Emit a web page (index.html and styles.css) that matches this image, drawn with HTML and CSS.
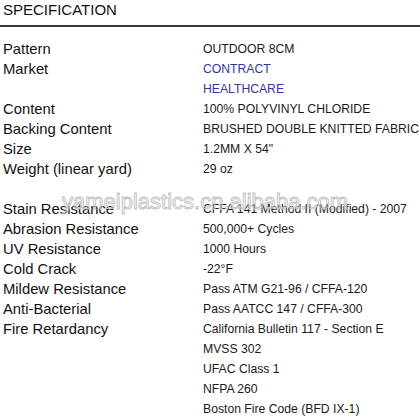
FILE: index.html
```html
<!DOCTYPE html>
<html lang="en">
<head>
<meta charset="utf-8">
<title>Specification</title>
<link rel="stylesheet" href="styles.css">
</head>
<body>
<div class="page">
  <header class="title">SPECIFICATION</header>
  <div class="spec">
    <div class="label">Pattern</div><div class="value">OUTDOOR 8CM</div>
    <div class="label">Market</div><div class="value link">CONTRACT</div>
    <div class="label"></div><div class="value link">HEALTHCARE</div>
    <div class="label">Content</div><div class="value">100% POLYVINYL CHLORIDE</div>
    <div class="label">Backing Content</div><div class="value">BRUSHED DOUBLE KNITTED FABRIC</div>
    <div class="label">Size</div><div class="value">1.2MM X 54"</div>
    <div class="label">Weight (linear yard)</div><div class="value">29 oz</div>
    <div class="gap"></div>
    <div class="label">Stain Resistance</div><div class="value">CFFA 141 Method II (Modified) - 2007</div>
    <div class="label">Abrasion Resistance</div><div class="value">500,000+ Cycles</div>
    <div class="label">UV Resistance</div><div class="value">1000 Hours</div>
    <div class="label">Cold Crack</div><div class="value">-22°F</div>
    <div class="label">Mildew Resistance</div><div class="value">Pass ATM G21-96 / CFFA-120</div>
    <div class="label">Anti-Bacterial</div><div class="value">Pass AATCC 147 / CFFA-300</div>
    <div class="label">Fire Retardancy</div><div class="value">California Bulletin 117 - Section E</div>
    <div class="label"></div><div class="value">MVSS 302</div>
    <div class="label"></div><div class="value">UFAC Class 1</div>
    <div class="label"></div><div class="value">NFPA 260</div>
    <div class="label"></div><div class="value">Boston Fire Code (BFD IX-1)</div>
  </div>
  <div class="watermark">yameiplastics.cn.alibaba.com</div>
</div>
</body>
</html>
```

FILE: styles.css
```css
html, body {
  margin: 0;
  padding: 0;
  background: #ffffff;
  overflow: hidden;
}

.page {
  position: relative;
  width: 420px;
  height: 420px;
  overflow: hidden;
  font-family: "Liberation Sans", Arial, sans-serif;
  color: #111111;
}

.title {
  font-size: 15px;
  line-height: 20px;
  height: 20px;
  padding: 0 0 5px 3px;
  border-bottom: 2px solid #3a3a3a;
  white-space: nowrap;
}

.spec {
  margin-top: 12px;
  display: grid;
  grid-template-columns: 200px 1fr;
  grid-auto-rows: 20px;
  padding-left: 3px;
}

.label {
  font-size: 14.8px;
  line-height: 20px;
  white-space: nowrap;
  color: #111111;
}

.value {
  font-size: 12.2px;
  line-height: 20px;
  white-space: nowrap;
  color: #1a1a1a;
}

.value.link {
  color: #3535a0;
}

.gap {
  grid-column: 1 / span 2;
}

.watermark {
  position: absolute;
  left: 62px;
  top: 191px;
  font-size: 22px;
  line-height: 22px;
  white-space: nowrap;
  color: transparent;
  -webkit-text-stroke: 1px #c4c4c4;
}
```
